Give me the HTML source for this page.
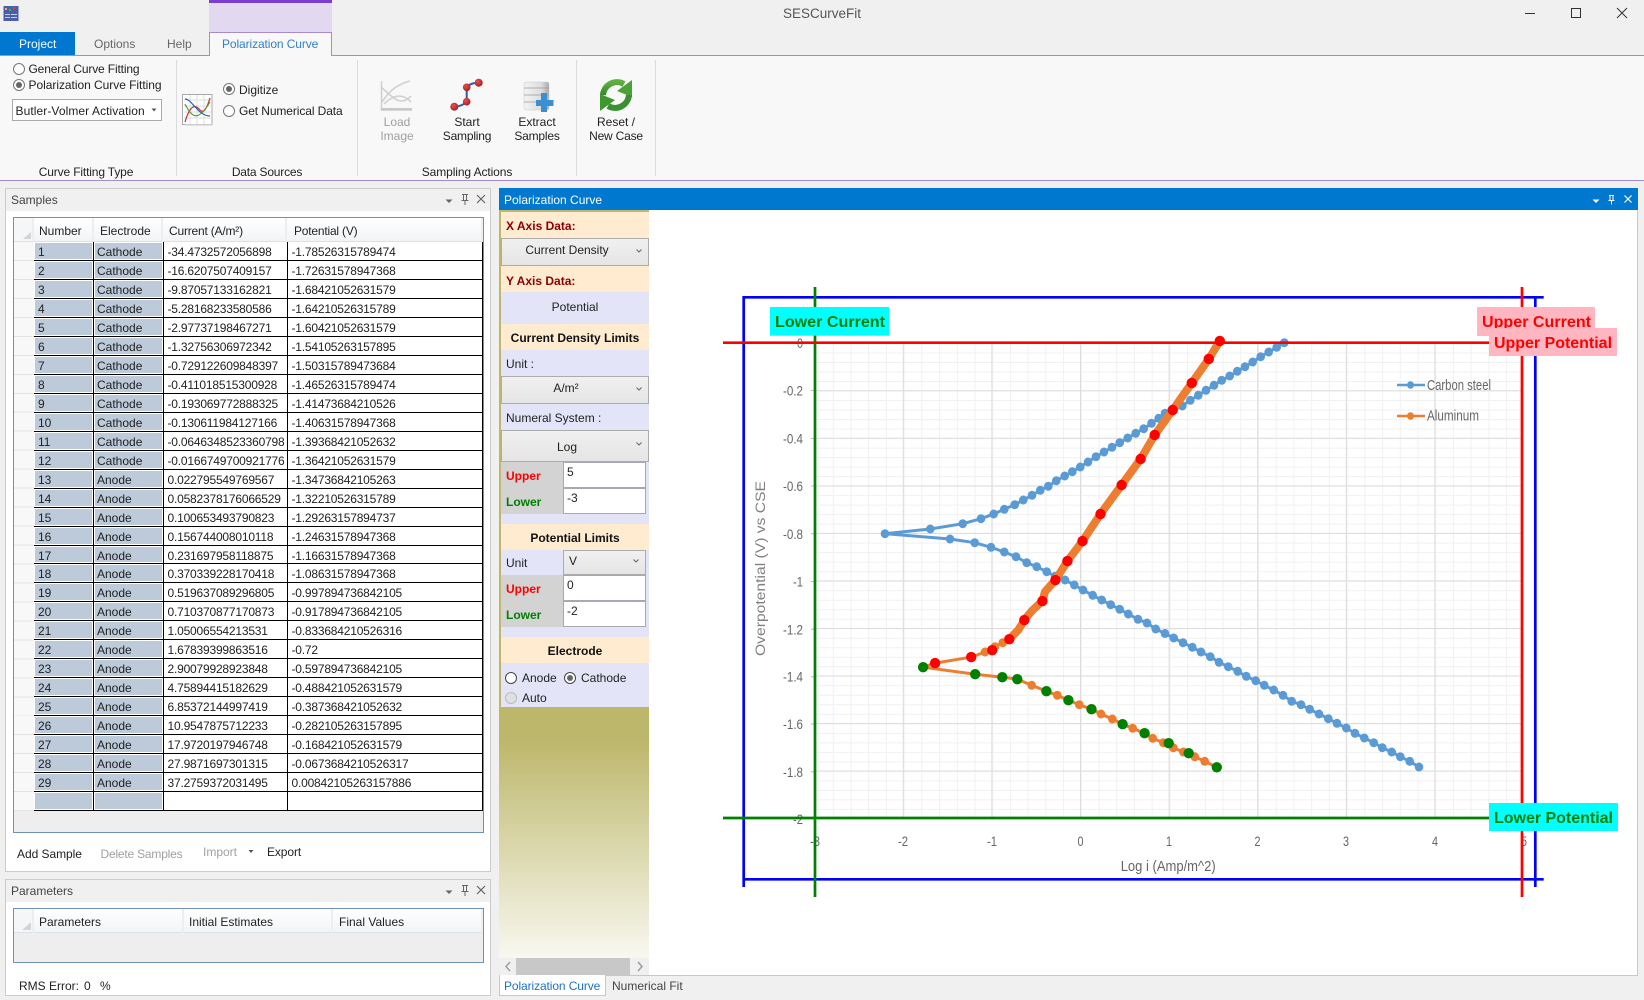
<!DOCTYPE html>
<html><head><meta charset="utf-8"><title>SESCurveFit</title>
<style>
html,body{margin:0;padding:0;width:1644px;height:1000px;overflow:hidden;background:#f0f0f0;font:12px/16px "Liberation Sans",sans-serif;color:#222}
.a{position:absolute;box-sizing:border-box}
.t{position:absolute;white-space:nowrap;line-height:16px;height:16px}
.c{transform:translateX(-50%)}
.g{color:#a0a0a0}
.h{letter-spacing:-.2px}
.k{letter-spacing:-.1px}
.pk{background:#ffebd0}.lv{background:#e4e4f9}
.cb{background:linear-gradient(#f0f0f0,#e5e5e5);border:1px solid #acacac}
.in{background:#fff;border:1px solid #a8a8b0;padding:2px 0 0 3px;line-height:14px}
.bd{font-weight:bold}
.rd{position:absolute;width:12px;height:12px;border-radius:50%;border:1px solid #777;background:#fff;box-sizing:border-box}
.rd.on::after{content:"";position:absolute;left:2px;top:2px;width:6px;height:6px;border-radius:50%;background:#666}
.panel{position:absolute;box-sizing:border-box;background:#fff;border:1px solid #ccc}
.ph{position:absolute;left:0;right:0;top:0;height:22px;background:#f0f0f0}
.grid{position:absolute;box-sizing:border-box;border:1px solid #6d92b5;background:#eee}
.hd{position:absolute;top:0;height:24px;background:linear-gradient(#fff,#f1f4f6);border-right:2px solid #eceff2;border-bottom:1px solid #dde1e5;box-sizing:border-box;line-height:27px;white-space:nowrap}
.rows{position:absolute;left:34px;top:242px;width:449px}
.r{height:18.97px;display:flex;box-sizing:border-box;border-bottom:1px solid #000}
.r span{display:block;box-sizing:border-box;border-right:1px solid #000;line-height:20px;white-space:nowrap;overflow:hidden;background:#fff}
.r span:nth-child(1){width:60px;padding-left:4px;background:#bccad9;box-shadow:inset 0 0 0 1px #fff}
.r span:nth-child(2){width:69.5px;padding-left:3px;background:#bccad9;box-shadow:inset 0 0 0 1px #fff}
.r span:nth-child(3){width:124px;padding-left:4px;letter-spacing:-.2px}
.r span:nth-child(4){width:195.5px;padding-left:4px;letter-spacing:-.2px}
svg{position:absolute;left:0;top:0}
</style></head><body>

<!-- title bar -->
<div class="a" style="left:209px;top:0;width:123px;height:32px;background:#e2d9f0;border-top:3px solid #7a3fd0"></div>
<div class="t" style="left:822px;top:6px;font-size:13.5px;color:#555" ><span class="c" style="display:block">SESCurveFit</span></div>

<!-- ribbon -->
<div class="a" style="left:0;top:55px;width:1644px;height:126px;background:#f8f8f8;border-top:1px solid #a58bcf;border-bottom:1px solid #a58bcf"></div>
<div class="a" style="left:0;top:32px;width:75px;height:23px;background:#0078d0"></div>
<div class="t" style="left:19px;top:36px;color:#fff">Project</div>
<div class="t" style="left:94px;top:36px;color:#666">Options</div>
<div class="t" style="left:167px;top:36px;color:#666">Help</div>
<div class="a" style="left:209px;top:32px;width:123px;height:24px;background:#f8f8f8;border:1px solid #a58bcf;border-bottom:0"></div>
<div class="t k" style="left:222px;top:36px;color:#2f7fd0">Polarization Curve</div>

<div class="a" style="left:176px;top:60px;width:1px;height:116px;background:#dcdcdc"></div>
<div class="a" style="left:357px;top:60px;width:1px;height:116px;background:#dcdcdc"></div>
<div class="a" style="left:576px;top:60px;width:1px;height:116px;background:#dcdcdc"></div>
<div class="a" style="left:655px;top:60px;width:1px;height:116px;background:#dcdcdc"></div>

<div class="rd" style="left:12.500px;top:63px"></div><div class="t" style="left:28.500px;top:61px;letter-spacing:-.15px">General Curve Fitting</div>
<div class="rd on" style="left:12.500px;top:79px"></div><div class="t" style="left:28.500px;top:77px;letter-spacing:-.04px">Polarization Curve Fitting</div>
<div class="a" style="left:12px;top:99px;width:150px;height:22px;background:#fff;border:1px solid #aaa"></div>
<div class="t" style="left:15.500px;top:103px;letter-spacing:.08px">Butler-Volmer Activation</div>
<div class="rd on" style="left:222.500px;top:83px"></div><div class="t" style="left:239px;top:82px">Digitize</div>
<div class="rd" style="left:222.500px;top:104.500px"></div><div class="t k" style="left:239px;top:103px">Get Numerical Data</div>

<div class="t g c" style="left:397px;top:114px">Load</div><div class="t g c" style="left:397px;top:128px">Image</div>
<div class="t c" style="left:467px;top:114px">Start</div><div class="t c h" style="left:467px;top:128px">Sampling</div>
<div class="t c" style="left:537px;top:114px">Extract</div><div class="t c h" style="left:537px;top:128px">Samples</div>
<div class="t c" style="left:616px;top:114px">Reset /</div><div class="t c h" style="left:616px;top:128px">New Case</div>
<div class="t c" style="left:86px;top:164px;letter-spacing:-.15px">Curve Fitting Type</div>
<div class="t c h" style="left:267px;top:164px">Data Sources</div>
<div class="t c" style="left:467px;top:164px;letter-spacing:-.1px">Sampling Actions</div>

<!-- samples panel -->
<div class="panel" style="left:5px;top:188px;width:486px;height:684px"><div class="ph"></div></div>
<div class="t" style="left:11px;top:192px;color:#444">Samples</div>
<div class="grid" style="left:13px;top:217px;width:471px;height:616px"></div>
<div class="hd" style="left:14px;top:218px;width:20px;background:#f4f6f8"></div>
<div class="hd" style="left:34px;top:218px;width:60px;padding-left:5px">Number</div>
<div class="hd" style="left:94px;top:218px;width:69px;padding-left:6px">Electrode</div>
<div class="hd h" style="left:163px;top:218px;width:124px;padding-left:6px">Current (A/m²)</div>
<div class="hd h" style="left:287px;top:218px;width:196px;padding-left:7px">Potential (V)</div>
<div class="a" style="left:14px;top:242px;width:20px;height:569px;background:repeating-linear-gradient(#f8f8f8 0,#f8f8f8 17.97px,#e4e4e4 17.97px,#e4e4e4 18.97px)"></div>
<div class="rows">
<div class="r"><span>1</span><span>Cathode</span><span>-34.4732572056898</span><span>-1.78526315789474</span></div>
<div class="r"><span>2</span><span>Cathode</span><span>-16.6207507409157</span><span>-1.72631578947368</span></div>
<div class="r"><span>3</span><span>Cathode</span><span>-9.87057133162821</span><span>-1.68421052631579</span></div>
<div class="r"><span>4</span><span>Cathode</span><span>-5.28168233580586</span><span>-1.64210526315789</span></div>
<div class="r"><span>5</span><span>Cathode</span><span>-2.97737198467271</span><span>-1.60421052631579</span></div>
<div class="r"><span>6</span><span>Cathode</span><span>-1.32756306972342</span><span>-1.54105263157895</span></div>
<div class="r"><span>7</span><span>Cathode</span><span>-0.729122609848397</span><span>-1.50315789473684</span></div>
<div class="r"><span>8</span><span>Cathode</span><span>-0.411018515300928</span><span>-1.46526315789474</span></div>
<div class="r"><span>9</span><span>Cathode</span><span>-0.193069772888325</span><span>-1.41473684210526</span></div>
<div class="r"><span>10</span><span>Cathode</span><span>-0.130611984127166</span><span>-1.40631578947368</span></div>
<div class="r"><span>11</span><span>Cathode</span><span>-0.0646348523360798</span><span>-1.39368421052632</span></div>
<div class="r"><span>12</span><span>Cathode</span><span>-0.0166749700921776</span><span>-1.36421052631579</span></div>
<div class="r"><span>13</span><span>Anode</span><span>0.022795549769567</span><span>-1.34736842105263</span></div>
<div class="r"><span>14</span><span>Anode</span><span>0.0582378176066529</span><span>-1.32210526315789</span></div>
<div class="r"><span>15</span><span>Anode</span><span>0.100653493790823</span><span>-1.29263157894737</span></div>
<div class="r"><span>16</span><span>Anode</span><span>0.156744008010118</span><span>-1.24631578947368</span></div>
<div class="r"><span>17</span><span>Anode</span><span>0.231697958118875</span><span>-1.16631578947368</span></div>
<div class="r"><span>18</span><span>Anode</span><span>0.370339228170418</span><span>-1.08631578947368</span></div>
<div class="r"><span>19</span><span>Anode</span><span>0.519637089296805</span><span>-0.997894736842105</span></div>
<div class="r"><span>20</span><span>Anode</span><span>0.710370877170873</span><span>-0.917894736842105</span></div>
<div class="r"><span>21</span><span>Anode</span><span>1.05006554213531</span><span>-0.833684210526316</span></div>
<div class="r"><span>22</span><span>Anode</span><span>1.67839399863516</span><span>-0.72</span></div>
<div class="r"><span>23</span><span>Anode</span><span>2.90079928923848</span><span>-0.597894736842105</span></div>
<div class="r"><span>24</span><span>Anode</span><span>4.75894415182629</span><span>-0.488421052631579</span></div>
<div class="r"><span>25</span><span>Anode</span><span>6.85372144997419</span><span>-0.387368421052632</span></div>
<div class="r"><span>26</span><span>Anode</span><span>10.9547875712233</span><span>-0.282105263157895</span></div>
<div class="r"><span>27</span><span>Anode</span><span>17.9720197946748</span><span>-0.168421052631579</span></div>
<div class="r"><span>28</span><span>Anode</span><span>27.9871697301315</span><span>-0.0673684210526317</span></div>
<div class="r"><span>29</span><span>Anode</span><span>37.2759372031495</span><span>0.00842105263157886</span></div>
<div class="r"><span></span><span></span><span></span><span></span></div>
</div>
<div class="t" style="left:17px;top:846px;letter-spacing:-.05px">Add Sample</div>
<div class="t g h" style="left:100.500px;top:846px">Delete Samples</div>
<div class="t g" style="left:203px;top:844px">Import</div>
<div class="t" style="left:267px;top:844px;letter-spacing:-.1px">Export</div>

<!-- parameters panel -->
<div class="panel" style="left:5px;top:879px;width:486px;height:117px"><div class="ph"></div></div>
<div class="t" style="left:11px;top:883px;color:#444">Parameters</div>
<div class="grid" style="left:13px;top:908px;width:471px;height:55px"></div>
<div class="hd" style="left:14px;top:909px;width:20px;background:#f4f6f8"></div>
<div class="hd" style="left:34px;top:909px;width:150px;padding-left:5px">Parameters</div>
<div class="hd" style="left:184px;top:909px;width:149px;padding-left:5px">Initial Estimates</div>
<div class="hd" style="left:333px;top:909px;width:150px;padding-left:6px">Final Values</div>
<div class="t" style="left:19px;top:978px">RMS Error:</div>
<div class="t" style="left:84px;top:978px">0</div>
<div class="t" style="left:100px;top:978px">%</div>

<!-- polarization panel -->
<div class="a" style="left:499px;top:188px;width:1139px;height:787px;background:#fff;border-right:1px solid #c8c8c8"></div>
<div class="a" style="left:499px;top:188px;width:1139px;height:22px;background:#0078d0"></div>
<div class="t" style="left:504px;top:192px;color:#fff">Polarization Curve</div>
<div class="a" style="left:499px;top:210px;width:150px;height:748px;background:linear-gradient(#bdb76b 0,#bdb76b 71%,#f8f8f0 100%)"></div>

<div class="a pk" style="left:501px;top:212px;width:148px;height:26px"></div>
<div class="t bd" style="left:506px;top:218px;color:#8b0000">X Axis Data:</div>
<div class="a cb" style="left:501px;top:238px;width:148px;height:28px"></div>
<div class="t c" style="left:567px;top:242px">Current Density</div>
<div class="a pk" style="left:501px;top:266px;width:148px;height:26px"></div>
<div class="t bd" style="left:506px;top:273px;color:#8b0000">Y Axis Data:</div>
<div class="a lv" style="left:501px;top:292px;width:148px;height:32px"></div>
<div class="t c" style="left:575px;top:299px">Potential</div>
<div class="a pk" style="left:501px;top:324px;width:148px;height:26px"></div>
<div class="t c bd" style="left:575px;top:330px;color:#111">Current Density Limits</div>
<div class="a lv" style="left:501px;top:350px;width:148px;height:26px"></div>
<div class="t" style="left:506px;top:356px">Unit :</div>
<div class="a cb" style="left:501px;top:376px;width:148px;height:28px"></div>
<div class="t c" style="left:566px;top:380px">A/m²</div>
<div class="a lv" style="left:501px;top:404px;width:148px;height:26px"></div>
<div class="t" style="left:506px;top:410px">Numeral System :</div>
<div class="a cb" style="left:501px;top:430px;width:148px;height:32px"></div>
<div class="t c" style="left:567px;top:439px">Log</div>

<div class="a lv" style="left:501px;top:462px;width:148px;height:62px"></div>
<div class="a" style="left:501px;top:462px;width:145px;height:52px;background:#d3d3d3"></div>
<div class="t bd" style="left:506px;top:468px;color:#f00">Upper</div>
<div class="t bd" style="left:506px;top:494px;color:#008000">Lower</div>
<div class="a in" style="left:563px;top:462px;width:83px;height:26px">5</div>
<div class="a in" style="left:563px;top:488px;width:83px;height:26px">-3</div>

<div class="a pk" style="left:501px;top:524px;width:148px;height:26px"></div>
<div class="t c bd" style="left:575px;top:530px;color:#111">Potential Limits</div>
<div class="a lv" style="left:501px;top:550px;width:148px;height:87px"></div>
<div class="t" style="left:506px;top:555px">Unit</div>
<div class="a cb" style="left:563px;top:550px;width:83px;height:25px"></div>
<div class="t" style="left:569px;top:553px">V</div>
<div class="a" style="left:501px;top:575px;width:145px;height:52px;background:#d3d3d3"></div>
<div class="t bd" style="left:506px;top:581px;color:#f00">Upper</div>
<div class="t bd" style="left:506px;top:607px;color:#008000">Lower</div>
<div class="a in" style="left:563px;top:575px;width:83px;height:26px">0</div>
<div class="a in" style="left:563px;top:601px;width:83px;height:26px">-2</div>

<div class="a pk" style="left:501px;top:637px;width:148px;height:26px"></div>
<div class="t c bd" style="left:575px;top:643px;color:#111">Electrode</div>
<div class="a lv" style="left:501px;top:663px;width:148px;height:44px"></div>
<div class="rd" style="left:504.500px;top:672px;border-color:#444"></div><div class="t" style="left:522px;top:670px">Anode</div>
<div class="rd on" style="left:563.500px;top:672px;border-color:#444"></div><div class="t" style="left:581px;top:670px">Cathode</div>
<div class="rd" style="left:504.500px;top:691.500px;border-color:#bbb;background:#e0e0e0"></div><div class="t" style="left:522px;top:690px">Auto</div>

<div class="a" style="left:499px;top:958px;width:150px;height:17px;background:#f0f0f0"></div>
<div class="a" style="left:516px;top:958px;width:114px;height:17px;background:#c8c8c8"></div>

<div class="a" style="left:499px;top:975px;width:1139px;height:1px;background:#c8c8c8"></div>
<div class="a" style="left:499px;top:975px;width:107px;height:21px;background:#fff;border:1px solid #c8c8c8;border-top:0"></div>
<div class="t k" style="left:504px;top:978px;color:#1a73c8">Polarization Curve</div>
<div class="t" style="left:612px;top:978px;color:#444">Numerical Fit</div>

<svg width="1644" height="1000" viewBox="0 0 1644 1000" xmlns="http://www.w3.org/2000/svg">
<defs>
<marker id="bm" markerUnits="userSpaceOnUse" markerWidth="10" markerHeight="10" refX="5" refY="5"><ellipse cx="5" cy="5" rx="4.300" ry="4.500" fill="#5b9bd5"/></marker>
<marker id="om" markerUnits="userSpaceOnUse" markerWidth="10" markerHeight="10" refX="5" refY="5"><ellipse cx="5" cy="5" rx="4.300" ry="4.500" fill="#ed7d31"/></marker>
<linearGradient id="cyl" x1="0" x2="1" y1="0" y2="0"><stop offset="0" stop-color="#f4f4f4"/><stop offset=".7" stop-color="#dcdcdc"/><stop offset="1" stop-color="#a8a8a8"/></linearGradient>
<linearGradient id="grn" x1="0" x2="0" y1="0" y2="1"><stop offset="0" stop-color="#5fb040"/><stop offset="1" stop-color="#2f8a28"/></linearGradient>
<radialGradient id="rb" cx=".4" cy=".35" r=".7"><stop offset="0" stop-color="#e85050"/><stop offset="1" stop-color="#a81820"/></radialGradient>
</defs>

<!-- corner triangles -->
<path d="M23 239H31V232Z" fill="#d4d4d4"/>
<path d="M22 930H31V922Z" fill="#d4d4d4"/>

<!-- app icon -->
<rect x="3.500" y="6" width="15" height="15" fill="#4a5fa8"/>
<rect x="5" y="8" width="2" height="2" fill="#e0c030"/><rect x="9" y="9" width="2" height="2" fill="#30c050"/><rect x="13" y="7" width="2" height="2" fill="#e04040"/>
<rect x="5" y="14" width="12" height="1" fill="#c8d0e8"/><rect x="5" y="17" width="12" height="1" fill="#c8d0e8"/><rect x="10" y="14" width="1" height="5" fill="#4a5fa8"/>
<!-- window controls -->
<path d="M1525 13.500H1535" stroke="#333" stroke-width="1" fill="none"/>
<rect x="1571.500" y="8.500" width="9" height="9" fill="none" stroke="#333"/>
<path d="M1617 8L1627 18M1627 8L1617 18" stroke="#333" stroke-width="1" fill="none"/>

<!-- ribbon icons -->
<path d="M151.500 108.500L156.500 108.500L154 111.500Z" fill="#555"/>
<g>
<rect x="182.500" y="94.500" width="29.500" height="30" fill="#fff" stroke="#aaa"/>
<rect x="185" y="124" width="27" height="1.500" fill="#ccc"/>
<path d="M184 100H211M184 106H211M184 112H211M184 118H211M190 95V124M197 95V124M204 95V124" stroke="#ddd" fill="none"/>
<path d="M185 122C190 105 195 104 200 110C204 114 207 108 210 98" stroke="#c03030" fill="none" stroke-width="1.200"/>
<path d="M185 104C192 118 198 122 210 102" stroke="#5a9a30" fill="none" stroke-width="1.200"/>
<path d="M185 99C192 99 198 116 210 116" stroke="#3060b0" fill="none" stroke-width="1.200"/>
</g>
<g fill="none" stroke="#cfcfcf" stroke-width="1.500">
<path d="M381.500 81V110H412"/>
<path d="M382 102C390 90 398 84 410 81"/>
<path d="M382 88C392 96 400 108 411 96"/>
<path d="M384 104C392 96 402 92 411 102"/>
<rect x="381" y="108" width="31" height="2.500" fill="#c8c8c8" stroke="none"/>
</g>
<path d="M454.300 106.700Q462 106.500 466.700 101.700L466.700 87.300Q470 82.800 478.700 82.700" fill="none" stroke="#2060b8" stroke-width="2"/>
<circle cx="454.300" cy="106.700" r="4" fill="url(#rb)"/><circle cx="466.700" cy="101.700" r="3.800" fill="url(#rb)"/><circle cx="466.700" cy="87.300" r="3.800" fill="url(#rb)"/><circle cx="478.700" cy="82.700" r="4" fill="url(#rb)"/>
<rect x="524" y="82" width="25" height="28" rx="2" fill="url(#cyl)" stroke="#c8c8c8" stroke-width=".5"/>
<path d="M524 88H549M524 95H549M524 102H549" stroke="#9a9a9a" stroke-width=".8"/>
<path d="M541 93H547V100H553.500V106H547V112H541V106H536V100H541Z" fill="#3a8fd0"/>
<g>
<path d="M603 95A14 14 0 0 1 624 84" fill="none" stroke="url(#grn)" stroke-width="6"/>
<path d="M632 80V97L617 91Z" fill="#4ba236"/>
<path d="M629 95A14 14 0 0 1 608 106" fill="none" stroke="#3a9030" stroke-width="6"/>
<path d="M600 111V94L615 100Z" fill="#3f982f"/>
</g>

<!-- panel header icons -->
<path d="M445.500 199.500H452.500L449 203Z" fill="#666"/><path d="M445.500 890.500H452.500L449 894Z" fill="#666"/>
<path d="M462 194.500H468M463.500 194.500V200.500M466.500 194.500V200.500M461.500 200.500H468.500M465 200.500V205M462 885.500H468M463.500 885.500V891.500M466.500 885.500V891.500M461.500 891.500H468.500M465 891.500V896" stroke="#666" fill="none"/>
<path d="M477 195L485 203M485 195L477 203M477 886L485 894M485 886L477 894" stroke="#666" stroke-width="1.200" fill="none"/>
<path d="M1592.500 199.500H1599.500L1596 203Z" fill="#fff"/>
<path d="M1609 195.500H1614M1610 195.500V200.500M1613 195.500V200.500M1608.500 200.500H1614.500M1611.500 200.500V204.500" stroke="#fff" fill="none"/>
<path d="M1624.500 195.500L1631.500 202.500M1631.500 195.500L1624.500 202.500" stroke="#fff" stroke-width="1.200" fill="none"/>

<!-- import arrow, combo chevrons, scroll chevrons -->
<path d="M248.500 850H253.500L251 853Z" fill="#555"/>
<g fill="none" stroke="#666" stroke-width="1">
<path d="M636.500 249.500L639 252L641.500 249.500"/>
<path d="M636.500 387.500L639 390L641.500 387.500"/>
<path d="M636.500 442.500L639 445L641.500 442.500"/>
<path d="M633.500 559.500L636 562L638.500 559.500"/>
</g>
<path d="M510 962L506 966.500L510 971M638 962L642 966.500L638 971" fill="none" stroke="#999" stroke-width="1.400"/>

<!-- chart grid -->
<line x1="815" y1="580.500" x2="1521" y2="580.500" stroke="#f1f1f1" stroke-width="475" stroke-dasharray="1 16.72"/>
<line x1="1168" y1="343" x2="1168" y2="818" stroke="#f1f1f1" stroke-width="706" stroke-dasharray="1 8.508"/>
<line x1="902.800" y1="580.500" x2="1521" y2="580.500" stroke="#dcdcdc" stroke-width="475" stroke-dasharray="1 87.600"/>
<line x1="1168" y1="342.700" x2="1168" y2="819" stroke="#dcdcdc" stroke-width="706" stroke-dasharray="1 46.540"/>
<path d="M811 390.500H815M811 438.500H815M811 486H815M811 533.700H815M811 581.500H815M811 629.300H815M811 676.800H815M811 724H815M811 771.700H815" stroke="#bbb"/>

<!-- tick labels -->
<g font-family="'Liberation Sans',sans-serif" font-size="14" fill="#666" text-anchor="end">
<text x="803" y="348" textLength="6" lengthAdjust="spacingAndGlyphs">0</text>
<text x="803" y="395.500" textLength="20" lengthAdjust="spacingAndGlyphs">-0.2</text>
<text x="803" y="443.500" textLength="20" lengthAdjust="spacingAndGlyphs">-0.4</text>
<text x="803" y="491" textLength="20" lengthAdjust="spacingAndGlyphs">-0.6</text>
<text x="803" y="539" textLength="20" lengthAdjust="spacingAndGlyphs">-0.8</text>
<text x="803" y="586.500" textLength="10" lengthAdjust="spacingAndGlyphs">-1</text>
<text x="803" y="634.500" textLength="20" lengthAdjust="spacingAndGlyphs">-1.2</text>
<text x="803" y="681.500" textLength="20" lengthAdjust="spacingAndGlyphs">-1.4</text>
<text x="803" y="729" textLength="20" lengthAdjust="spacingAndGlyphs">-1.6</text>
<text x="803" y="777" textLength="20" lengthAdjust="spacingAndGlyphs">-1.8</text>
<text x="803" y="824" textLength="10" lengthAdjust="spacingAndGlyphs">-2</text>
</g>
<g font-family="'Liberation Sans',sans-serif" font-size="14" fill="#666" text-anchor="middle">
<text x="815" y="846" textLength="10" lengthAdjust="spacingAndGlyphs">-3</text><text x="903" y="846" textLength="10" lengthAdjust="spacingAndGlyphs">-2</text><text x="992" y="846" textLength="10" lengthAdjust="spacingAndGlyphs">-1</text><text x="1080.500" y="846" textLength="6" lengthAdjust="spacingAndGlyphs">0</text><text x="1169" y="846" textLength="6" lengthAdjust="spacingAndGlyphs">1</text><text x="1257.500" y="846" textLength="6" lengthAdjust="spacingAndGlyphs">2</text><text x="1346" y="846" textLength="6" lengthAdjust="spacingAndGlyphs">3</text><text x="1435" y="846" textLength="6" lengthAdjust="spacingAndGlyphs">4</text><text x="1524" y="846" textLength="6" lengthAdjust="spacingAndGlyphs">5</text>
</g>
<text x="1120.700" y="871" font-family="'Liberation Sans',sans-serif" font-size="15" fill="#666" textLength="95" lengthAdjust="spacingAndGlyphs">Log i (Amp/m^2)</text>
<text transform="translate(765 656) rotate(-90)" font-family="'Liberation Sans',sans-serif" font-size="13.500" fill="#808080" textLength="175" lengthAdjust="spacingAndGlyphs">Overpotential (V) vs CSE</text>

<!-- legend -->
<path d="M1397 385H1425" stroke="#5b9bd5" stroke-width="2.500"/><ellipse cx="1410.500" cy="385" rx="3.500" ry="3.800" fill="#5b9bd5"/>
<path d="M1397 416H1425" stroke="#ed7d31" stroke-width="2.500"/><ellipse cx="1410.500" cy="416" rx="3.500" ry="3.800" fill="#ed7d31"/>
<text x="1427" y="390" font-family="'Liberation Sans',sans-serif" font-size="15" fill="#666" textLength="64" lengthAdjust="spacingAndGlyphs">Carbon steel</text>
<text x="1427" y="420.500" font-family="'Liberation Sans',sans-serif" font-size="15" fill="#666" textLength="52" lengthAdjust="spacingAndGlyphs">Aluminum</text>

<!-- blue series -->
<polyline fill="none" stroke="#5b9bd5" stroke-width="3" marker-start="url(#bm)" marker-mid="url(#bm)" marker-end="url(#bm)" points="1284.300,342.700 1276.700,347.300 1268.700,352 1260.700,356.700 1252.700,362 1245,366.700 1237.300,371.300 1229.700,376 1221.700,380.300 1214,385.300 1206,390.300 1198.300,395.300 1190.300,400.300 1182.300,406 1173.500,410 1165,413.300 1158.700,418.300 1151.500,423.300 1143.700,428.700 1135.700,433.300 1127.700,438 1119.700,442.700 1112,447.300 1104,452 1096,456.700 1088,462 1080.300,467 1072.300,471.700 1064.700,476 1056.300,480.700 1048.300,486.300 1040.300,490.300 1032,495.300 1023.300,500 1014.700,504.700 1004.300,509.300 993.700,514 981,518.700 962.700,523.700 930.300,529 885,533.700 950,539 974.700,542.700 991,547.300 1004.300,552 1016,556.700 1026.700,562.700 1036.700,566.700 1046.700,571.700 1055,576.300 1065,580 1074.300,585 1083,590 1092.700,595.300 1101.700,600 1110.700,604.700 1119.700,609.300 1128.300,614 1138,619.300 1147,623 1155.700,629 1165,633.500 1173.700,638 1183,642.700 1192.300,647.300 1201,652 1210.300,656.700 1219,662.300 1228.300,666.700 1237.700,671.300 1246.300,676.300 1255.700,680.700 1264.300,685.300 1273.700,690 1283,695.300 1291.700,701.300 1301,704.700 1309.700,709.300 1319,714 1328.300,718.700 1337,723.300 1346.300,728 1355,733.300 1364.300,738 1373.700,742.700 1382.300,747.700 1391.700,752 1400.300,756.700 1409.700,761.300 1419,767"/>

<!-- orange series -->
<polyline fill="none" stroke="#ed7d31" stroke-width="3" marker-start="url(#om)" marker-mid="url(#om)" marker-end="url(#om)" points="935.100,663.100 923.100,667.200 975.200,674.200 1002.300,677.200 1017.300,679.200 1031.700,685.300 1046.400,691.200 1057.300,695.300 1068.400,700.200 1079.300,704.700 1091.500,709.200 1101,714 1112.300,719 1122.600,724.200 1132.700,728.300 1144.600,733.200 1152.700,738.300 1163.300,742.700 1168.700,743.200 1173.300,747.700 1183.300,752 1188.700,753.200 1194.700,756.700 1204.700,761.300 1216.800,767.300"/>
<polyline fill="none" stroke="#ed7d31" stroke-width="3" marker-start="url(#om)" marker-mid="url(#om)" marker-end="url(#om)" points="935.100,663.100 971.200,657.100 985,652 992.200,650.200 995,646.700 1002.700,642.700 1009.300,639.200"/>
<polyline fill="none" stroke="#ed7d31" stroke-width="8" points="1009.300,639.200 1013.300,635 1018.300,630 1024.300,620.100 1028.300,615 1032.700,610 1042.400,601.100 1045,591.700 1055.400,580.100 1067.400,561.100 1082.500,541.100 1100.500,514 1121.600,485 1140.600,459 1154.700,435 1172.700,410 1191.800,382.900 1208.800,358.900 1219.800,340.900"/>

<!-- samples: anode red -->
<g fill="#f00">
<circle cx="935.100" cy="663.100" r="5.200"/><circle cx="971.200" cy="657.100" r="5.200"/><circle cx="992.200" cy="650.200" r="5.200"/><circle cx="1009.300" cy="639.200" r="5.200"/><circle cx="1024.300" cy="620.100" r="5.200"/><circle cx="1042.400" cy="601.100" r="5.200"/><circle cx="1055.400" cy="580.100" r="5.200"/><circle cx="1067.400" cy="561.100" r="5.200"/><circle cx="1082.500" cy="541.100" r="5.200"/><circle cx="1100.500" cy="514" r="5.200"/><circle cx="1121.600" cy="485" r="5.200"/><circle cx="1140.600" cy="459" r="5.200"/><circle cx="1154.700" cy="435" r="5.200"/><circle cx="1172.700" cy="410" r="5.200"/><circle cx="1191.800" cy="382.900" r="5.200"/><circle cx="1208.800" cy="358.900" r="5.200"/><circle cx="1219.800" cy="340.900" r="5.200"/>
</g>
<!-- samples: cathode green -->
<g fill="#008000">
<circle cx="1216.800" cy="767.300" r="5.200"/><circle cx="1188.700" cy="753.200" r="5.200"/><circle cx="1168.700" cy="743.200" r="5.200"/><circle cx="1144.600" cy="733.200" r="5.200"/><circle cx="1122.600" cy="724.200" r="5.200"/><circle cx="1091.500" cy="709.200" r="5.200"/><circle cx="1068.400" cy="700.200" r="5.200"/><circle cx="1046.400" cy="691.200" r="5.200"/><circle cx="1017.300" cy="679.200" r="5.200"/><circle cx="1002.300" cy="677.200" r="5.200"/><circle cx="975.200" cy="674.200" r="5.200"/><circle cx="923.100" cy="667.200" r="5.200"/>
</g>

<!-- bound rectangle and limit lines -->
<path d="M743.700 887V297.300H1543.700M1535.300 297.300V887M743.700 879.300H1543.700" fill="none" stroke="#0000ff" stroke-width="2.700"/>
<path d="M815 287V897M723 818H1489" fill="none" stroke="#008000" stroke-width="2.700"/>
<path d="M1522 287V897M723 342.700H1489" fill="none" stroke="#f00" stroke-width="2.700"/>

<g font-family="'Liberation Sans',sans-serif" font-size="16" font-weight="bold">
<rect x="770" y="307" width="119" height="28.700" fill="#0ff"/>
<text x="775" y="327" fill="#008000" textLength="110" lengthAdjust="spacingAndGlyphs">Lower Current</text>
<rect x="1477" y="307" width="118" height="29" fill="#ffb6c1"/>
<text x="1482" y="327" fill="#f00" textLength="109" lengthAdjust="spacingAndGlyphs">Upper Current</text>
<rect x="1489" y="328" width="128" height="28" fill="#ffb6c1"/>
<text x="1494" y="348" fill="#f00" textLength="118" lengthAdjust="spacingAndGlyphs">Upper Potential</text>
<rect x="1489" y="803" width="129" height="28" fill="#0ff"/>
<text x="1494" y="823" fill="#008000" textLength="119" lengthAdjust="spacingAndGlyphs">Lower Potential</text>
</g>
</svg>
</body></html>
